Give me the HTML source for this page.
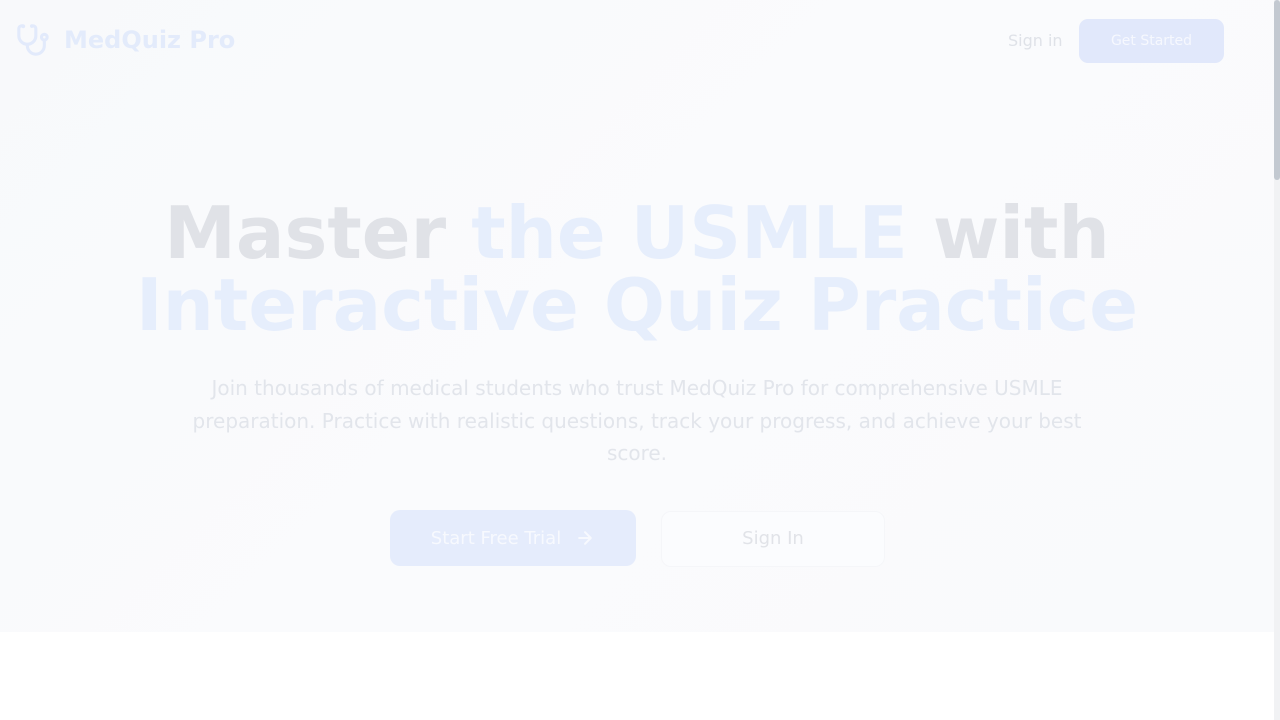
<!DOCTYPE html>
<html><head><style>
html,body{margin:0;padding:0;width:1280px;height:720px;overflow:hidden;background:#fff;font-family:"DejaVu Sans","Liberation Sans",sans-serif;}
.hero{position:absolute;left:0;top:0;width:1274px;height:632px;background:linear-gradient(135deg,#f8f9fb 0%,#fafbfd 50%,#f9fafc 100%);}
.sb{position:absolute;right:0;top:0;width:6px;height:720px;background:#f1f2f4;}
.thumb{position:absolute;right:0;top:0;width:6px;height:180px;background:#c3c9d1;border-radius:3px;}
.logo{position:absolute;left:16px;top:23px;display:flex;align-items:center;}
.logo span{font-weight:bold;font-size:24px;color:#e3ebfb;margin-left:14px;}
.signin{position:absolute;left:1008px;top:31px;font-size:16px;color:#dfe2e8;}
.gs{position:absolute;left:1079px;top:19px;width:145px;height:44px;border-radius:9px;background:#e1e8fb;color:#f6f8fe;font-size:14px;text-align:center;line-height:44px;}
h1{position:absolute;left:0;width:1274px;top:197px;margin:0;text-align:center;font-size:72px;line-height:72px;font-weight:bold;color:#e0e2e7;}
h1 .b{color:#e6eefc;}
p{position:absolute;left:187px;width:900px;top:372px;margin:0;text-align:center;font-size:20px;line-height:32.5px;color:#e2e5eb;}
.b1{position:absolute;left:390px;top:510px;width:246px;height:56px;border-radius:10px;background:#e5ecfc;color:#f7f9fe;font-size:18px;display:flex;align-items:center;justify-content:center;gap:14px;}
.b2{position:absolute;left:661px;top:511px;width:222px;height:54px;border-radius:10px;border:1px solid #f5f6f9;background:#fbfcfe;color:#e1e3e8;font-size:18px;text-align:center;line-height:54px;}
</style></head><body>
<div class="hero"></div>
<div class="logo"><svg width="34" height="34" viewBox="0 0 24 24" fill="none" stroke="#e2eafb" stroke-width="2.2" stroke-linecap="round" stroke-linejoin="round"><path d="M4.8 2.3A.3.3 0 1 0 5 2H4a2 2 0 0 0-2 2v5a6 6 0 0 0 6 6 6 6 0 0 0 6-6V4a2 2 0 0 0-2-2h-1a.2.2 0 1 0 .3.3"/><path d="M8 15v1a6 6 0 0 0 6 6 6 6 0 0 0 6-6v-4"/><circle cx="20" cy="10" r="2"/></svg><span>MedQuiz Pro</span></div>
<div class="signin">Sign in</div>
<div class="gs">Get Started</div>
<h1>Master <span class="b">the USMLE</span> with<br><span class="b">Interactive Quiz Practice</span></h1>
<p>Join thousands of medical students who trust MedQuiz Pro for comprehensive USMLE preparation. Practice with realistic questions, track your progress, and achieve your best score.</p>
<div class="b1">Start Free Trial <svg width="20" height="20" viewBox="0 0 24 24" fill="none" stroke="#f7f9fe" stroke-width="2.4" stroke-linecap="round" stroke-linejoin="round"><path d="M5 12h14M12 5l7 7-7 7"/></svg></div>
<div class="b2">Sign In</div>
<div class="sb"></div><div class="thumb"></div>
</body></html>
